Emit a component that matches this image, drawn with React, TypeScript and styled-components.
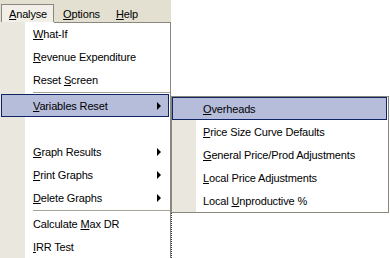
import styled, { createGlobalStyle } from 'styled-components'

const GlobalStyle = createGlobalStyle`
  html, body {
    margin: 0;
    padding: 0;
    background: #fff;
    overflow: hidden;
  }
  body {
    font-family: 'Liberation Sans', Arial, sans-serif;
    font-size: 11px;
    letter-spacing: -0.15px;
    color: #000;
  }
`

const Screen = styled.div`
  position: relative;
  width: 390px;
  height: 258px;
  background: #fff;
  overflow: hidden;
`

const MenuBar = styled.div`
  width: 171px;
  height: 22px;
  box-sizing: border-box;
  padding-left: 1px;
  display: flex;
  align-items: flex-end;
  background: #e3e0d1;
`

const MenuTitle = styled.div<{ $open?: boolean }>`
  height: 18px;
  box-sizing: border-box;
  padding: 0 6px 0 7px;
  margin-right: 1px;
  display: flex;
  align-items: center;
  border: 1px solid ${(p) => (p.$open ? '#8a877c' : 'transparent')};
  border-bottom: none;
  background: ${(p) => (p.$open ? '#f1efe7' : 'transparent')};
`

const Menu = styled.div<{ $left: number; $top: number; $width: number; $tab?: number }>`
  position: absolute;
  left: ${(p) => p.$left}px;
  top: ${(p) => p.$top}px;
  width: ${(p) => p.$width}px;
  box-sizing: border-box;
  border: 1px solid #8a877c;
  background: linear-gradient(to right, #eae8de 0 24px, #fff 24px);
  z-index: 2;

  ${(p) =>
    p.$tab
      ? `
    border-top: none;
    border-left-color: #eae8de;
    &::before {
      content: '';
      position: absolute;
      left: ${p.$tab}px;
      right: -1px;
      top: 0;
      height: 1px;
      background: #8a877c;
    }
  `
      : ''}
`

const Item = styled.div<{ $active?: boolean; $pad: number }>`
  height: 23px;
  box-sizing: border-box;
  margin-right: 1px;
  padding-left: ${(p) => p.$pad}px;
  padding-right: 7px;
  display: flex;
  align-items: center;
  justify-content: space-between;
  white-space: nowrap;
  border: 1px solid ${(p) => (p.$active ? '#0f2466' : 'transparent')};
  background: ${(p) => (p.$active ? '#b6bddb' : 'transparent')};
`

const Separator = styled.div`
  height: 3px;
  margin-left: 32px;
  background: linear-gradient(#fff 0 1px, #a6a398 1px 2px, #fff 2px);
`

const Arrow = styled.span`
  width: 0;
  height: 0;
  border-top: 4px solid transparent;
  border-bottom: 4px solid transparent;
  border-left: 4px solid #000;
`

const WindowEdge = styled.div`
  position: absolute;
  left: 171px;
  top: 213px;
  width: 0;
  height: 45px;
  border-left: 1px dotted #3c3a36;
`

type Entry = { label: string; key?: number; sub?: boolean; active?: boolean } | 'sep' | 'blank'

const Label = ({ label, k }: { label: string; k?: number }) =>
  k === undefined ? (
    <span>{label}</span>
  ) : (
    <span>
      {label.slice(0, k)}
      <u>{label[k]}</u>
      {label.slice(k + 1)}
    </span>
  )

const analyse: Entry[] = [
  { label: 'What-If', key: 0 },
  { label: 'Revenue Expenditure', key: 0 },
  { label: 'Reset Screen', key: 6 },
  'sep',
  { label: 'Variables Reset', key: 0, sub: true, active: true },
  'blank',
  { label: 'Graph Results', key: 0, sub: true },
  { label: 'Print Graphs', key: 0, sub: true },
  { label: 'Delete Graphs', key: 0, sub: true },
  'sep',
  { label: 'Calculate Max DR', key: 10 },
  { label: 'IRR Test', key: 0 },
]

const variables: Entry[] = [
  { label: 'Overheads', key: 0, active: true },
  { label: 'Price Size Curve Defaults', key: 0 },
  { label: 'General Price/Prod Adjustments', key: 0 },
  { label: 'Local Price Adjustments', key: 0 },
  { label: 'Local Unproductive %', key: 6 },
]

const renderItems = (items: Entry[], pad: number) =>
  items.map((it, i) => {
    if (it === 'sep') return <Separator key={i} />
    if (it === 'blank') return <Item key={i} $pad={pad} />
    return (
      <Item key={i} $pad={pad} $active={it.active}>
        <Label label={it.label} k={it.key} />
        {it.sub && <Arrow />}
      </Item>
    )
  })

export default function App() {
  return (
    <Screen>
      <GlobalStyle />
      <MenuBar>
        <MenuTitle $open>
          <Label label='Analyse' k={0} />
        </MenuTitle>
        <MenuTitle>
          <Label label='Options' k={0} />
        </MenuTitle>
        <MenuTitle>
          <Label label='Help' k={0} />
        </MenuTitle>
      </MenuBar>

      <Menu $left={0} $top={22} $width={171} $tab={53}>
        {renderItems(analyse, 31)}
      </Menu>

      <Menu $left={171} $top={96} $width={218}>
        {renderItems(variables, 30)}
      </Menu>

      <WindowEdge />
    </Screen>
  )
}
